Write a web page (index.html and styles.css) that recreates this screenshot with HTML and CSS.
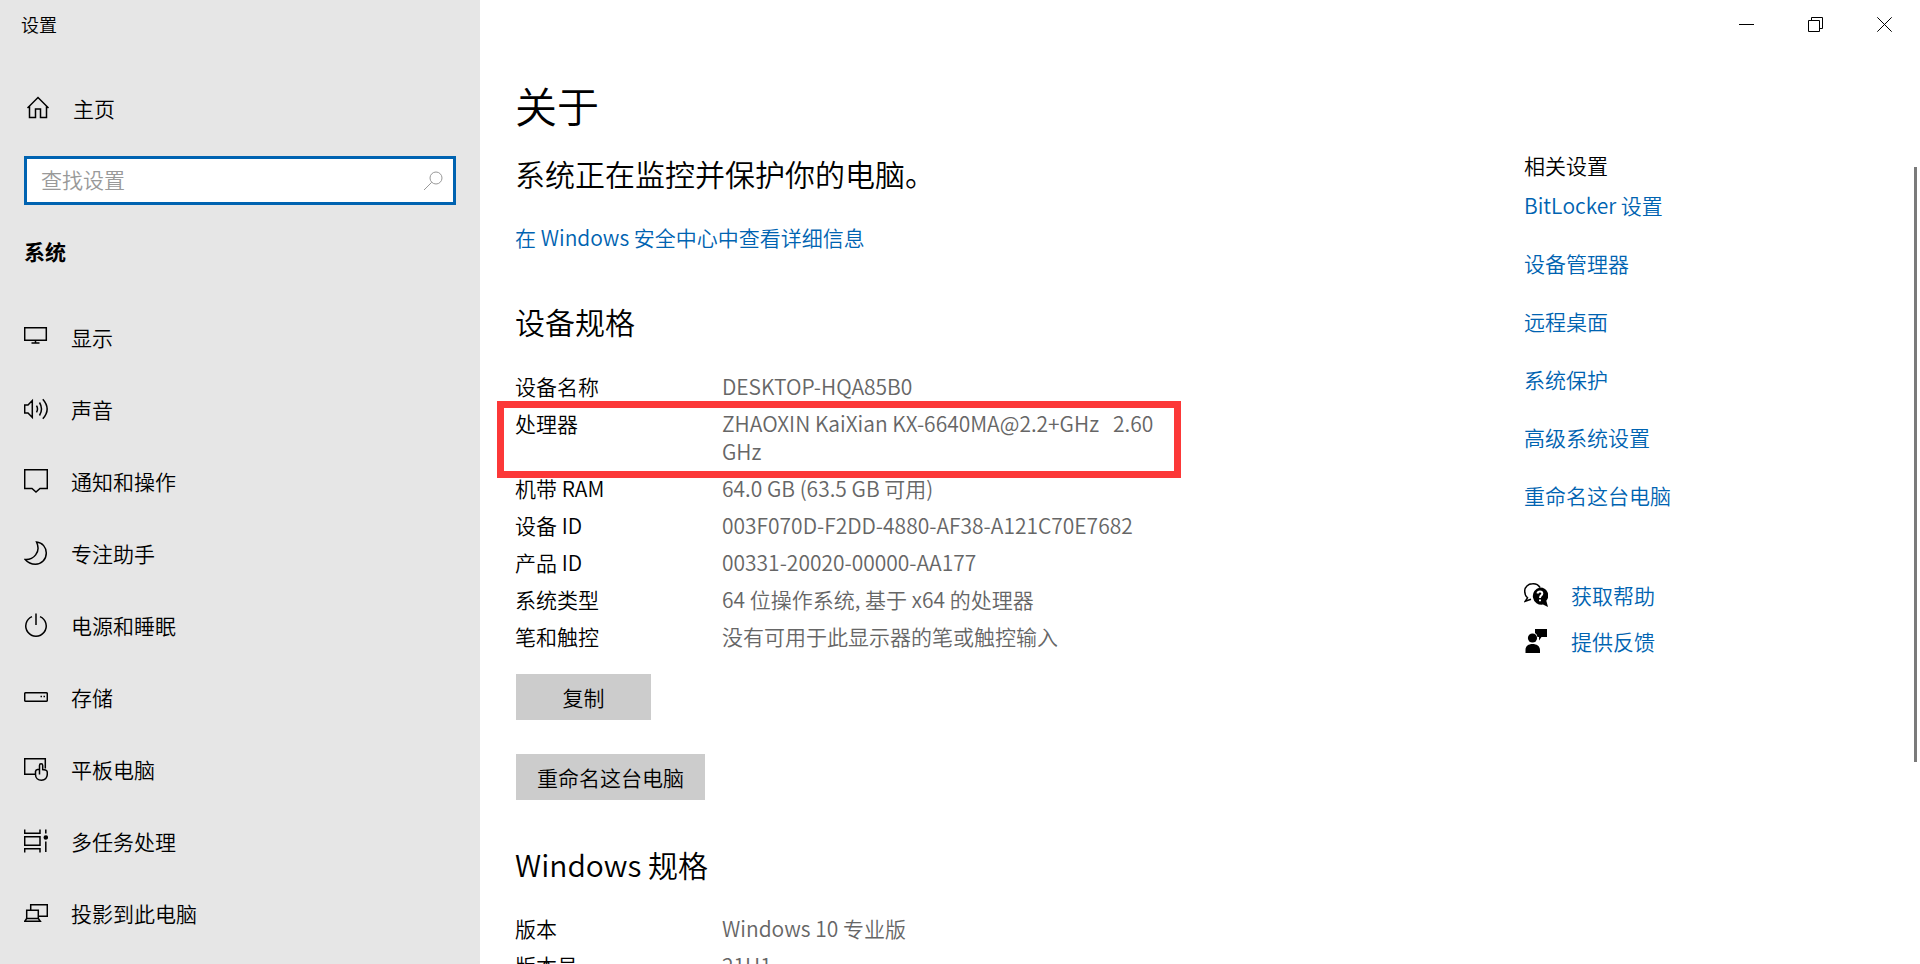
FILE: index.html
```html
<!DOCTYPE html>
<html lang="zh-CN">
<head>
<meta charset="utf-8">
<title>设置</title>
<link rel="stylesheet" href="styles.css">
</head>
<body>
<div class="window">
  <aside class="sidebar">
    <div class="app-title">设置</div>
    <a class="home" href="#home">
      <svg class="icon" viewBox="0 0 24 24"><path d="M1.500 12 12 1.500 22.500 12M3.500 10.500V21.500H9.500V13H14.500V21.500H20.500V10.500"/></svg>
      <span>主页</span>
    </a>
    <form class="search" role="search">
      <input class="search-input" type="text" placeholder="查找设置" aria-label="查找设置">
      <button class="search-button" type="button" aria-label="搜索">
        <svg class="search-icon" viewBox="0 0 20 20"><circle cx="13" cy="7" r="6"/><path d="M8.700 11.300 1 19"/></svg>
      </button>
    </form>
    <h2 class="group-title">系统</h2>
    <nav class="nav">
      <a class="nav-item" href="#display">
        <svg class="icon" viewBox="0 0 24 24"><path d="M.7 2.700H22.300V15.300H.7zM11.500 15.500V18M7.500 18H15.500"/></svg>
        <span>显示</span>
      </a>
      <a class="nav-item" href="#sound">
        <svg class="icon" viewBox="0 0 24 24"><path d="M.7 8H4L8.300 3.500V20.500L4 16H.7zM12.500 8.700Q14.500 12 12.500 15.300M15.500 5.500Q19.500 12 15.500 18.500M18.800 2.200Q27.500 12 18.800 21.800"/></svg>
        <span>声音</span>
      </a>
      <a class="nav-item" href="#notifications">
        <svg class="icon" viewBox="0 0 24 24"><path d="M.7.7H23.300V19.500H16L12 23 8 19.500H.7z"/></svg>
        <span>通知和操作</span>
      </a>
      <a class="nav-item" href="#focus">
        <svg class="icon" viewBox="0 0 24 24"><path d="M12.500 1C18.500 1.500 22.300 6.500 22.300 12 22.300 18.500 17.500 23.200 11.500 23.200 7 23.200 3.300 21 1.200 18.500 9 19 17.500 11.500 12.500 1z"/></svg>
        <span>专注助手</span>
      </a>
      <a class="nav-item" href="#power">
        <svg class="icon" viewBox="0 0 24 24"><path d="M12 .5V12M8 3.600A10.200 10.200 0 1 0 16 3.600"/></svg>
        <span>电源和睡眠</span>
      </a>
      <a class="nav-item" href="#storage">
        <svg class="icon" viewBox="0 0 24 24"><rect x=".7" y="7.700" width="22.600" height="8.600" rx="1"/><path d="M16.500 11.500H18M19.500 11.500H21"/></svg>
        <span>存储</span>
      </a>
      <a class="nav-item" href="#tablet">
        <svg class="icon" viewBox="0 0 24 24"><path d="M11.500 17.300H.7V1.700H21.300V11.500M15.500 17.500V8.500C15.500 6.300 18.700 6.300 18.700 8.500V12.500L21.500 13Q23.300 13.500 23.300 15.500V17C23.300 21 20.700 23.200 17.500 23.200 14 23.200 11.500 21 11.500 17.500V14.500Q11.800 12.800 13.500 12.600H15.500"/></svg>
        <span>平板电脑</span>
      </a>
      <a class="nav-item" href="#multitask">
        <svg class="icon" viewBox="0 0 24 24"><path d="M.7.5V4.300H16V.5M.7 7.700H16V16.300H.7zM.7 23.500V19.700H16V23.500M21.800.5V4.500M21.800 12.500V23"/><circle class="solid" cx="21.800" cy="8.500" r="2.300"/></svg>
        <span>多任务处理</span>
      </a>
      <a class="nav-item" href="#project">
        <svg class="icon" viewBox="0 0 24 24"><path d="M6.700 8.500V3.700H23.300V15.300H15M2.700 9.300H14.300V17.500H2.700zM2.700 17.500.7 20.300H16.300L14.300 17.500"/></svg>
        <span>投影到此电脑</span>
      </a>
    </nav>
  </aside>

  <div class="page">
    <header class="title-bar">
      <button class="window-button" type="button" aria-label="最小化"><svg class="caption-icon" viewBox="0 0 15 15"><path d="M0 7.500H15"/></svg></button>
      <button class="window-button" type="button" aria-label="还原"><svg class="caption-icon" viewBox="0 0 15 15"><path d="M.5 3.500H11.500V14.500H.5zM3.500 3V.5H14.500V11.500H12"/></svg></button>
      <button class="window-button" type="button" aria-label="关闭"><svg class="caption-icon" viewBox="0 0 15 15"><path d="M.3.3 14.700 14.700M14.700.3.3 14.700"/></svg></button>
    </header>
    <div class="columns">
      <main class="about">
        <h1 class="page-title">关于</h1>
        <p class="status">系统正在监控并保护你的电脑。</p>
        <a class="link security" href="#security">在 Windows 安全中心中查看详细信息</a>

        <h2 class="section-title">设备规格</h2>
        <dl class="specs">
          <div class="spec"><dt>设备名称</dt><dd>DESKTOP-HQA85B0</dd></div>
          <div class="spec highlighted"><dt>处理器</dt><dd>ZHAOXIN KaiXian KX-6640MA@2.2+GHz   2.60 GHz</dd></div>
          <div class="spec"><dt>机带 RAM</dt><dd>64.0 GB (63.5 GB 可用)</dd></div>
          <div class="spec"><dt>设备 ID</dt><dd>003F070D-F2DD-4880-AF38-A121C70E7682</dd></div>
          <div class="spec"><dt>产品 ID</dt><dd>00331-20020-00000-AA177</dd></div>
          <div class="spec"><dt>系统类型</dt><dd>64 位操作系统, 基于 x64 的处理器</dd></div>
          <div class="spec"><dt>笔和触控</dt><dd>没有可用于此显示器的笔或触控输入</dd></div>
        </dl>
        <div class="actions">
          <button class="action" type="button">复制</button>
          <button class="action" type="button">重命名这台电脑</button>
        </div>

        <h2 class="section-title">Windows 规格</h2>
        <dl class="specs">
          <div class="spec"><dt>版本</dt><dd>Windows 10 专业版</dd></div>
          <div class="spec"><dt>版本号</dt><dd>21H1</dd></div>
        </dl>
      </main>

      <aside class="related">
        <h2 class="related-title">相关设置</h2>
        <nav class="related-links">
          <a class="link" href="#bitlocker">BitLocker 设置</a>
          <a class="link" href="#devices">设备管理器</a>
          <a class="link" href="#remote">远程桌面</a>
          <a class="link" href="#protection">系统保护</a>
          <a class="link" href="#advanced">高级系统设置</a>
          <a class="link" href="#rename">重命名这台电脑</a>
        </nav>
        <div class="support">
          <a class="link support-link" href="#help">
            <svg class="icon" viewBox="0 0 24 24"><path d="M16 4.500A8 8 0 0 0 8.500.8C4 .8.700 4 .7 8.200 .7 11 1.800 13.300 3.500 14.800L1.200 18.200 7 16.200"/><path class="solid" d="M16 4.500a8 8 0 0 1 6.300 13.200L24 24l-5-2.400A8.500 8.500 0 1 1 16 4.500z"/><path class="question" d="M13.500 10.500Q13.800 8.500 16 8.500 18.300 8.500 18.300 10.500 18.300 11.500 17.200 12.400 16 13.300 16 15M16 16.500V18.200"/></svg>
            <span>获取帮助</span>
          </a>
          <a class="link support-link" href="#feedback">
            <svg class="icon" viewBox="0 0 24 24"><path class="solid" d="M11 0H23V8H17.500L15 11.500V8H13.500Q13 5 11 4zM1.500 24V21C1.500 17 4.500 15 8.500 15S16 17 16 21V24z"/><circle class="solid" cx="8.500" cy="9" r="4.600"/></svg>
            <span>提供反馈</span>
          </a>
        </div>
      </aside>
      <div class="scrollbar"></div>
    </div>
  </div>
</div>
</body>
</html>
```
FILE: styles.css
```css
* {
  box-sizing: border-box;
}

body {
  margin: 0;
  background: #fff;
  color: #000;
  font: 350 21px/28px "Noto Sans CJK SC", sans-serif;
}

h1, h2, p, dl, dd {
  margin: 0;
  font-weight: 350;
}

a {
  color: inherit;
  text-decoration: none;
}

button {
  border: 0;
  padding: 0;
  color: inherit;
  font: inherit;
}

svg {
  flex: none;
  fill: none;
  stroke: #000;
}

.window {
  display: flex;
  height: 100vh;
  overflow: hidden;
}

.icon {
  width: 24px;
  height: 24px;
  stroke-width: 1.5;
}

.solid {
  fill: #000;
  stroke: none;
}

.question {
  stroke: #fff;
  stroke-width: 2;
}

/* Sidebar */

.sidebar {
  flex: 0 0 25%;
  padding: 0 24px;
  background: #e6e6e6;
}

.app-title {
  height: 48px;
  margin-left: -3px;
  font-size: 18px;
  line-height: 48px;
}

.home {
  display: flex;
  align-items: center;
  gap: 23px;
  height: 72px;
  margin: 24px 0 12px;
  padding: 0 2px;
}

.search {
  display: flex;
  align-items: center;
  height: 49px;
  border: 3px solid #0063b1;
  background: #fff;
}

.search-input {
  flex: 1;
  min-width: 0;
  border: 0;
  padding: 0 15px 4px 14px;
  outline: 0;
  background: none;
  font: inherit;
}

.search-input::placeholder {
  color: #999;
  opacity: 1;
}

.search-button {
  display: flex;
  align-items: center;
  justify-content: center;
  width: 40px;
  height: 43px;
  background: none;
}

.search-icon {
  width: 20px;
  height: 20px;
  stroke: #999;
}

.group-title {
  margin: 32px 0 36px;
  font-size: 21px;
  font-weight: 700;
}

.nav-item {
  display: flex;
  align-items: center;
  gap: 23px;
  height: 72px;
}

/* Page */

.page {
  display: flex;
  flex: 1;
  flex-direction: column;
  min-width: 0;
}

.title-bar {
  display: flex;
  flex: none;
  justify-content: flex-end;
  height: 48px;
  padding-right: 1px;
}

.window-button {
  display: flex;
  align-items: center;
  justify-content: center;
  width: 69px;
  background: none;
}

.caption-icon {
  width: 15px;
  height: 15px;
}

.columns {
  display: flex;
  flex: 1;
  min-height: 0;
}

.about {
  flex: 0 0 70%;
  padding: 29px 36px 0 35px;
}

.page-title {
  font-size: 42px;
  line-height: 56px;
}

.status {
  margin-top: 20px;
  font-size: 30px;
  line-height: 40px;
}

.link {
  color: #0063b1;
}

.security {
  display: block;
  margin-top: 30px;
}

.section-title {
  margin: 50px 0 31px;
  font-size: 30px;
  line-height: 40px;
}

.specs {
  display: grid;
  gap: 9px;
  max-width: 648px;
}

.spec {
  display: grid;
  grid-template-columns: 207px 1fr;
}

.spec dd {
  color: #666;
  white-space: pre-wrap;
}

.highlighted {
  position: relative;
}

.highlighted::after {
  position: absolute;
  inset: -8px -18px -13px -18px;
  border: 7px solid #fc3838;
  content: "";
}

.actions {
  display: flex;
  flex-direction: column;
  align-items: flex-start;
  gap: 34px;
  margin: 24px 0 0 1px;
}

.actions + .section-title {
  margin: 44px 0 30px;
}

.action {
  min-width: 135px;
  height: 46px;
  padding: 0 21px;
  background: #ccc;
}

/* Related settings */

.related {
  flex: 1;
  padding: 103px 0 0 36px;
}

.related-title {
  font-size: 21px;
}

.related-links {
  display: grid;
  gap: 30px;
  margin-top: 12px;
}

.support {
  display: grid;
  gap: 18px;
  margin-top: 72px;
}

.support-link {
  display: flex;
  align-items: center;
  gap: 23px;
}

.scrollbar {
  width: 3px;
  height: 65%;
  margin: 119px 3px 0 0;
  background: #7a7a7a;
}
```
